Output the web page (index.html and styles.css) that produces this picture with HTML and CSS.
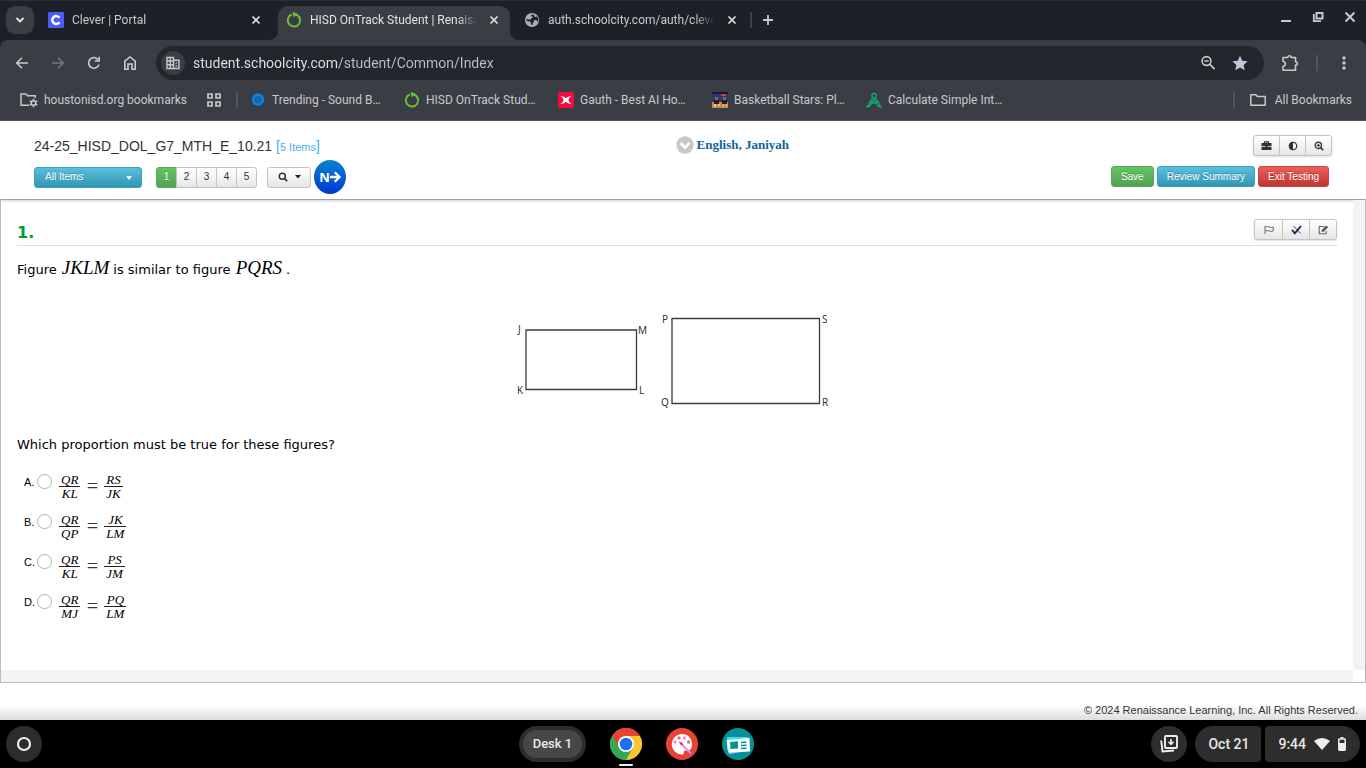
FILE: index.html
```html
<!DOCTYPE html>
<html lang="en">
<head>
<meta charset="utf-8">
<title>HISD OnTrack Student | Renaissance</title>
<link rel="stylesheet" href="styles.css">
</head>
<body>
<svg class="defs" aria-hidden="true">
  <symbol id="close" viewBox="0 0 10 10"><path d="M1.500 1.500l7 7M8.500 1.500l-7 7" stroke="currentColor" stroke-width="1.700"/></symbol>
  <symbol id="ring" viewBox="0 0 16 16"><path d="M9.500 2.300A6.200 6.200 0 1 1 5.800 2.500" fill="none" stroke="#6cbe3a" stroke-width="1.900"/><path d="M6.500 0l4.800 1.600-3.600 3.800z" fill="#6cbe3a"/><path d="M9 2.400a6.200 6.200 0 0 1 4.700 4" fill="none" stroke="#6cbe3a" stroke-width="1.900"/></symbol>
  <symbol id="folder" viewBox="0 0 16 14"><path d="M.8 1.800h5l1.600 1.800h7.800v8.600H.8z" fill="none" stroke="currentColor" stroke-width="1.500" stroke-linejoin="round"/></symbol>
</svg>

<header class="browser">
  <div class="tabstrip">
    <button class="tab-search" aria-label="Search tabs"><svg width="10" height="8" viewBox="0 0 10 8"><path d="M1.500 2L5 5.500 8.500 2" fill="none" stroke="currentColor" stroke-width="1.800"/></svg></button>
    <div class="tab">
      <svg width="16" height="16" viewBox="0 0 16 16"><rect width="16" height="16" rx="1" fill="#4a5cf5"/><path d="M11.400 5.800A3.900 3.900 0 1 0 11.400 10.200" fill="none" stroke="#fff" stroke-width="2.500"/></svg>
      <span class="tab-title">Clever | Portal</span>
      <button class="tab-close" aria-label="Close tab"><svg width="10" height="10"><use href="#close"/></svg></button>
    </div>
    <div class="tab tab-active">
      <svg width="16" height="16"><use href="#ring"/></svg>
      <span class="tab-title">HISD OnTrack Student | Renaissance</span>
      <button class="tab-close" aria-label="Close tab"><svg width="10" height="10"><use href="#close"/></svg></button>
    </div>
    <div class="tab">
      <svg width="16" height="16" viewBox="0 0 16 16"><circle cx="8" cy="8" r="7" fill="#a9adb5"/><path d="M7.500 2.500q-1 1.500.5 2t0 1.800q-1.500.2-1.700 1.400l-3.800-.6q-.3 1.500.8 2.200l2.700.3q1 .3.800 1.600l.8 1.800 1.200-.3v-2l1.300-1.300-.2-1.400 2.700.2.600 1.300 1-.2q.6-3.200-1.500-5l-1.200.8-1.300-.3V3z" fill="#1d2027"/></svg>
      <span class="tab-title">auth.schoolcity.com/auth/clever/login</span>
      <button class="tab-close" aria-label="Close tab"><svg width="10" height="10"><use href="#close"/></svg></button>
    </div>
    <i class="rule tab-rule"></i>
    <button class="icon-btn" aria-label="New tab"><svg width="12" height="12" viewBox="0 0 12 12"><path d="M6 1v10M1 6h10" stroke="currentColor" stroke-width="1.800"/></svg></button>
    <div class="window-controls">
      <button class="icon-btn" aria-label="Minimize"><svg width="12" height="12" viewBox="0 0 12 12"><path d="M1 10h10" stroke="currentColor" stroke-width="2"/></svg></button>
      <button class="icon-btn" aria-label="Restore"><svg width="12" height="12" viewBox="0 0 12 12"><path d="M4.500 2h6v5.500h-6z" fill="none" stroke="currentColor" stroke-width="2"/><path d="M1.800 3v7.200H9" fill="none" stroke="currentColor" stroke-width="1.800"/></svg></button>
      <button class="icon-btn" aria-label="Close window"><svg width="12" height="12" viewBox="0 0 12 12"><path d="M1.500 1.500l9 9M10.500 1.500l-9 9" stroke="currentColor" stroke-width="2"/></svg></button>
    </div>
  </div>

  <div class="toolbar">
    <div class="nav-buttons">
      <button class="icon-btn" aria-label="Back"><svg width="14" height="14" viewBox="0 0 14 14"><path d="M13 7H2M7 1.700L1.700 7 7 12.300" fill="none" stroke="currentColor" stroke-width="1.600"/></svg></button>
      <button class="icon-btn dim" aria-label="Forward"><svg width="14" height="14" viewBox="0 0 14 14"><path d="M1 7h11M7 1.700L12.300 7 7 12.300" fill="none" stroke="currentColor" stroke-width="1.600"/></svg></button>
      <button class="icon-btn" aria-label="Reload"><svg width="14" height="14" viewBox="0 0 14 14"><path d="M12 8.500A5.300 5.300 0 1 1 11.200 3.700" fill="none" stroke="currentColor" stroke-width="1.600"/><path d="M13 .8v5H7.800V4.300h3.600V.8z" fill="currentColor"/></svg></button>
      <button class="icon-btn" aria-label="Home"><svg width="14" height="16" viewBox="0 0 14 16"><path d="M1.800 14.200V6.200L7 2l5.200 4.200v8H9V9H5v5.200z" fill="none" stroke="currentColor" stroke-width="1.600"/></svg></button>
    </div>
    <div class="omnibox">
      <span class="site-chip"><svg width="14" height="14" viewBox="0 0 14 14"><path d="M1 1.500h6.500v11H1zM1 5h6.500M1 8.800h6.500M4.200 1.500v11M7.500 4.300H13v8.200H7.500" fill="none" stroke="currentColor" stroke-width="1.400"/><path d="M9.500 6.200h1.700v1.300H9.500zM9.500 9.200h1.700v1.300H9.500z" fill="currentColor"/></svg></span>
      <input class="url" type="text" aria-label="Address" value="student.schoolcity.com/student/Common/Index">
      <button class="icon-btn" aria-label="Zoom"><svg width="16" height="16" viewBox="0 0 16 16"><circle cx="6.500" cy="6" r="4.400" fill="none" stroke="#c7c7c7" stroke-width="1.600"/><path d="M4.300 6h4.400M9.600 9.200l5 5" stroke="#c7c7c7" stroke-width="1.700"/></svg></button>
      <button class="icon-btn" aria-label="Edit bookmark"><svg width="16" height="16" viewBox="0 0 16 16"><path d="M8 .8l2.200 4.900 5.400.6-4 3.600 1.100 5.300L8 12.500l-4.700 2.700 1.100-5.300-4-3.600 5.400-.6z" fill="#c0c6d8"/></svg></button>
    </div>
    <div class="toolbar-end">
      <button class="icon-btn" aria-label="Extensions"><svg width="18" height="18" viewBox="0 0 18 18"><path d="M2 3.500h4.800a1.700 1.700 0 0 1 3.400 0h4.300v4.200a1.700 1.700 0 0 1 0 3.400v5.100H2v-3.700c3.200-.6 3.200-4.700 0-5.300z" fill="none" stroke="currentColor" stroke-width="1.600" stroke-linejoin="round"/></svg></button>
      <i class="rule"></i>
      <button class="icon-btn" aria-label="Menu"><svg width="4" height="16" viewBox="0 0 4 16"><g fill="currentColor"><circle cx="2" cy="3" r="1.700"/><circle cx="2" cy="8" r="1.700"/><circle cx="2" cy="13" r="1.700"/></g></svg></button>
    </div>
  </div>

  <nav class="bookmarks" aria-label="Bookmarks">
    <a class="managed" href="#"><svg width="18" height="16" viewBox="0 0 18 16"><path d="M9 13.200H1V2h5l1.600 1.700h7.600V6" fill="none" stroke="currentColor" stroke-width="1.500"/><circle cx="13.500" cy="11" r="2.300" fill="none" stroke="currentColor" stroke-width="1.500"/><path d="M13.500 6.700v2M13.500 13.300v2M9.800 8.900l1.700 1M15.500 12.100l1.700 1M9.800 13.100l1.700-1M15.500 9.900l1.700-1" stroke="currentColor" stroke-width="1.500"/></svg>houstonisd.org bookmarks</a>
    <button class="icon-btn apps" aria-label="Apps"><svg width="14" height="14" viewBox="0 0 14 14"><path d="M1 1h4v4H1zM9 1h4v4H9zM1 9h4v4H1zM9 9h4v4H9z" fill="none" stroke="currentColor" stroke-width="1.700"/></svg></button>
    <i class="rule"></i>
    <div class="bookmark-list">
      <a class="bookmark" href="#"><svg width="16" height="16" viewBox="0 0 16 16"><circle cx="8" cy="8" r="7.200" fill="#0b3f70"/><circle cx="8" cy="7.600" r="6.400" fill="#1976c5"/><circle cx="8" cy="7.600" r="4.500" fill="#1268b4" stroke="#3793df" stroke-width=".7"/></svg>Trending - Sound B…</a>
      <a class="bookmark" href="#"><svg width="16" height="16"><use href="#ring"/></svg>HISD OnTrack Stud…</a>
      <a class="bookmark" href="#"><svg width="16" height="16" viewBox="0 0 16 16"><rect width="16" height="16" rx="2.500" fill="#f80b3c"/><path d="M2.500 4.300Q6.300 4 8 6.300 9.700 4 13.500 4.300 10.500 5.500 10.500 8T13.500 11.700Q9.700 12 8 9.700 6.300 12 2.500 11.700 5.500 10.500 5.500 8T2.500 4.300z" fill="#fff"/></svg>Gauth - Best AI Ho…</a>
      <a class="bookmark" href="#"><svg width="16" height="16" viewBox="0 0 16 16"><path d="M0 0h16v16H0z" fill="#263a78"/><path d="M0 10h16v6H0z" fill="#c98b55"/><path d="M0 0h16v2H0z" fill="#1b1733"/><path d="M9 2h5v2H9z" fill="#d33b46"/><path d="M3 5h3v3H3zM11 5h3v3h-3z" fill="#9b603e"/><path d="M2 8h5v4H2zM10 8h5v4h-5z" fill="#2b1c2d"/><path d="M2 12h2v3H2zM6 12h2v2H6zM11 12h1v3h-1zM14 12h1v2h-1z" fill="#f0c083"/></svg>Basketball Stars: Pl…</a>
      <a class="bookmark" href="#"><svg width="16" height="16" viewBox="0 0 16 16"><g fill="none" stroke="#17a97a" stroke-width="1.300"><circle cx="8" cy="3.600" r="2.200"/><path d="M6.800 5.700L1 15l2.700-.8L8 7.200l4.300 7 2.700.8-5.800-9.300M3 9.500q5 3 10 0"/></g></svg>Calculate Simple Int…</a>
    </div>
    <i class="rule"></i>
    <a class="all-bookmarks" href="#"><svg width="16" height="14"><use href="#folder"/></svg>All Bookmarks</a>
  </nav>
</header>

<section class="test-header">
  <div class="test-left">
    <h1 class="test-title">24-25_HISD_DOL_G7_MTH_E_10.21 <span class="item-count">[<small>5 Items</small>]</span></h1>
    <div class="test-nav">
      <span class="filter"><select class="btn btn-info" aria-label="Item filter"><option>All Items</option></select></span>
      <div class="group">
        <button class="btn btn-success">1</button><button class="btn">2</button><button class="btn">3</button><button class="btn">4</button><button class="btn">5</button>
      </div>
      <button class="btn search-btn" aria-label="Search options"><svg width="10" height="10" viewBox="0 0 10 10"><circle cx="4.300" cy="4.200" r="3" fill="none" stroke="#333" stroke-width="1.500"/><path d="M6.500 6.500l2.700 2.700" stroke="#333" stroke-width="1.700"/></svg><svg width="6" height="4" viewBox="0 0 6 4"><path d="M0 0h6L3 3.500z" fill="#222"/></svg></button>
      <button class="next" aria-label="Next">N<svg width="11" height="12" viewBox="0 0 11 12"><path d="M0 6h9M4.800 1.200L9.600 6l-4.800 4.800" fill="none" stroke="#fff" stroke-width="2.300"/></svg></button>
    </div>
  </div>
  <button class="student"><svg width="18" height="18" viewBox="0 0 18 18"><circle cx="9" cy="9" r="8.700" fill="#c8c8c8"/><path d="M4.500 7L9 11.500 13.500 7" fill="none" stroke="#fff" stroke-width="2.800"/></svg>English, Janiyah</button>
  <div class="test-right">
    <div class="group tools">
      <button class="btn" aria-label="Toolbox"><svg width="11" height="10" viewBox="0 0 11 10"><path d="M3.500 2.200V.8h4v1.400" fill="none" stroke="#333" stroke-width="1.200"/><path d="M.5 2h10v3.300h-10zM.5 6h10v3h-10z" fill="#333"/><path d="M4.500 5h2v1.600h-2z" fill="#333"/></svg></button><button class="btn" aria-label="Contrast"><svg width="10" height="10" viewBox="0 0 10 10"><circle cx="5" cy="5" r="3.700" fill="#fff" stroke="#333" stroke-width="1.200"/><path d="M5 1a4 4 0 0 0 0 8z" fill="#333"/></svg></button><button class="btn" aria-label="Zoom in"><svg width="10" height="10" viewBox="0 0 10 10"><circle cx="4.300" cy="4.300" r="3.200" fill="none" stroke="#333" stroke-width="1.300"/><path d="M2.500 4.300h3.600M4.300 2.500v3.600" stroke="#333"/><path d="M6.500 6.500l2.700 2.700" stroke="#333" stroke-width="1.700"/></svg></button>
    </div>
    <div class="actions">
      <button class="btn btn-success">Save</button>
      <button class="btn btn-info">Review Summary</button>
      <button class="btn btn-danger">Exit Testing</button>
    </div>
  </div>
</section>

<main class="frame">
  <article class="question">
    <div class="question-head">
      <h2 class="number">1.</h2>
      <div class="group marks">
        <button class="btn" aria-label="Flag"><svg width="10" height="10" viewBox="0 0 10 10"><path d="M1 1v8M1.500 2q2-1 4 0t3.700 0v4q-2 .8-3.700 0t-4 0" fill="none" stroke="#666"/></svg></button><button class="btn" aria-label="Eliminate answers"><svg width="11" height="10" viewBox="0 0 11 10"><path d="M2.500 1l7 7.500" stroke="#8990a2" stroke-width="1.200"/><path d="M1 5l2.800 3.300L10 1" fill="none" stroke="#172449" stroke-width="1.900"/></svg></button><button class="btn" aria-label="Notes"><svg width="11" height="10" viewBox="0 0 11 10"><path d="M6.500 1.500H1.200v7.300h7V6" fill="none" stroke="#666" stroke-width="1.100"/><path d="M4 4.800L8.300.5l1.800 1.800-4.300 4.300-2.200.4z" fill="#555"/></svg></button>
      </div>
    </div>
    <p class="stem">Figure <i class="math">JKLM</i>is similar to figure <i class="math">PQRS</i>.</p>
    <svg class="figure" width="328" height="105" viewBox="0 0 328 105" role="img" aria-label="Rectangles JKLM and PQRS">
      <g fill="none" stroke="#3c3c3c" stroke-width="1.300"><path d="M13 21h110.500v59.500H13zM159 9.500h147.500v85H159z"/></g>
      <g class="figure-labels"><text x="5" y="24">J</text><text x="125" y="25">M</text><text x="4" y="85">K</text><text x="126" y="85">L</text><text x="149" y="14">P</text><text x="309" y="14">S</text><text x="148" y="97">Q</text><text x="309" y="97">R</text></g>
    </svg>
    <p class="stem prompt">Which proportion must be true for these figures?</p>
    <div class="options">
      <label class="option"><span class="letter">A.</span><input type="radio" name="answer"><span class="frac"><i>QR</i><i>KL</i></span><span class="eq">=</span><span class="frac"><i>RS</i><i>JK</i></span></label>
      <label class="option"><span class="letter">B.</span><input type="radio" name="answer"><span class="frac"><i>QR</i><i>QP</i></span><span class="eq">=</span><span class="frac"><i>JK</i><i>LM</i></span></label>
      <label class="option"><span class="letter">C.</span><input type="radio" name="answer"><span class="frac"><i>QR</i><i>KL</i></span><span class="eq">=</span><span class="frac"><i>PS</i><i>JM</i></span></label>
      <label class="option"><span class="letter">D.</span><input type="radio" name="answer"><span class="frac"><i>QR</i><i>MJ</i></span><span class="eq">=</span><span class="frac"><i>PQ</i><i>LM</i></span></label>
    </div>
  </article>
  <div class="track"></div>
  <div class="track"></div>
</main>

<footer class="copyright">© 2024 Renaissance Learning, Inc. All Rights Reserved.</footer>

<div class="shelf">
  <button class="round" aria-label="Launcher"><svg width="16" height="16" viewBox="0 0 16 16"><circle cx="8" cy="8" r="6" fill="none" stroke="#eee" stroke-width="2.200"/></svg></button>
  <div class="apps-row">
    <button class="desk"><span>Desk 1</span></button>
    <button class="app running" aria-label="Chrome"><svg width="32" height="32" viewBox="0 0 32 32"><circle cx="16" cy="16" r="16" fill="#34a853"/><path d="M16 16L2.140 8A16 16 0 0 1 29.860 8z" fill="#ea4335"/><path d="M16 8h13.860A16 16 0 0 1 16 32l6.900-12z" fill="#fbc430"/><path d="M2.140 8l6.950 12L16 16V8z" fill="#ea4335"/><path d="M2.140 8l6.950 12A8 8 0 0 0 19 23.500L16 32A16 16 0 0 1 2.140 8z" fill="#34a853"/><circle cx="16" cy="16" r="8" fill="#fff"/><circle cx="16" cy="16" r="6.300" fill="#1a73e8"/></svg></button>
    <button class="app" aria-label="Canvas"><svg width="32" height="32" viewBox="0 0 32 32"><circle cx="16" cy="16" r="16" fill="#ea4335"/><path d="M16 6a10 10 0 1 0 0 20.500c2.500 0 1.300-2 2-3.300 1-1.700 3.300 0 5-.7 2-1 3-3 3-6C26 10 21.500 6 16 6z" fill="#fff"/><circle cx="13" cy="10" r="1.700" fill="#f06a8a"/><circle cx="18.500" cy="10" r="1.700" fill="#e88df0"/><circle cx="22.500" cy="14" r="1.700" fill="#ea6a60"/><circle cx="9" cy="14" r="1.700" fill="#e88df0"/><path d="M15 15.500l10 10" stroke="#e88df0" stroke-width="2"/><path d="M12.500 13.500l3.500 1 1.300 2.300-2 .7z" fill="#e33"/></svg></button>
    <button class="app" aria-label="News"><svg width="32" height="32" viewBox="0 0 32 32"><circle cx="16" cy="16" r="16" fill="#069298"/><path d="M5 9h21v13H5z" fill="#3ee0dc"/><path d="M5 13l22-1-1 11-19 3z" fill="#a7c3f5"/><path d="M4.500 12l23-2 .5 13.500-21.500 1z" fill="#fff"/><path d="M8 14l8-.7.200 7.200-7.700.5z" fill="#069298"/><path d="M19 14.500l5.500-.3M19 17.500l5.500-.2M19 20.500l5.500-.2" stroke="#069298" stroke-width="1.600"/></svg></button>
  </div>
  <div class="status">
    <button class="round" aria-label="Holding space"><svg width="18" height="18" viewBox="0 0 18 18"><rect x="5" y="1" width="12" height="12" rx="1" fill="none" stroke="#eee" stroke-width="1.900"/><path d="M1.200 5.500l1.300 11 11.500-1" fill="none" stroke="#eee" stroke-width="1.900"/><path d="M11 4v5M8.500 6.800L11 9.300l2.500-2.500" fill="none" stroke="#eee" stroke-width="1.600"/></svg></button>
    <button class="date">Oct 21</button>
    <button class="clock">9:44 <svg width="16" height="12" viewBox="0 0 16 12"><path d="M8 12L0 3q8-6 16 0z" fill="#eee"/></svg><svg width="8" height="14" viewBox="0 0 8 14"><path d="M2.500 0h3v1.500h-3z" fill="#eee"/><rect x=".8" y="2" width="6.400" height="11.200" rx=".6" fill="none" stroke="#eee" stroke-width="1.500"/><path d="M1 6h6v7H1z" fill="#eee"/></svg></button>
  </div>
</div>
</body>
</html>
```
FILE: styles.css
```css
* { box-sizing: border-box; }
html, body { margin: 0; }
body {
  display: flex;
  flex-direction: column;
  min-height: 100vh;
  background: #fff;
  color: #000;
  font-family: "Liberation Sans", Arial, sans-serif;
}
button, input, select { font: inherit; color: inherit; margin: 0; }
button { border: 0; padding: 0; background: none; }
a { color: inherit; text-decoration: none; }
svg { flex: none; display: block; }
.defs { position: absolute; width: 0; height: 0; }

/* Browser chrome */
.browser {
  background: #1d2027;
  color: #c7c9cc;
  font: 12px/16px Roboto, sans-serif;
}
.icon-btn {
  display: flex;
  align-items: center;
  justify-content: center;
  width: 32px;
  height: 28px;
  flex: none;
}
.rule { width: 2px; height: 16px; flex: none; background: #50545b; }
.tabstrip {
  display: flex;
  align-items: center;
  gap: 6px;
  height: 40px;
  padding-left: 6px;
  padding-bottom: 1px;
  border-top: 1px solid #2c3035;
}
.tab-search {
  display: grid;
  place-items: center;
  width: 28px;
  height: 28px;
  border-radius: 9px;
  background: #3a3e44;
  color: #e6e6e6;
}
.tab {
  position: relative;
  display: flex;
  align-items: center;
  gap: 8px;
  flex: 0 1 232px;
  min-width: 0;
  height: 28px;
  padding: 0 11px 0 8px;
}
.tab-active {
  align-self: flex-end;
  height: 34px;
  margin-bottom: -1px;
  padding-bottom: 6px;
  border-radius: 10px 10px 0 0;
  background: #3a3e44;
  color: #e3e3e3;
}
.tab-active::before, .tab-active::after {
  content: "";
  position: absolute;
  bottom: 0;
  width: 10px;
  height: 10px;
}
.tab-active::before { right: 100%; background: radial-gradient(circle at 0 0, #1d2027 10px, #3a3e44 11px); }
.tab-active::after { left: 100%; background: radial-gradient(circle at 100% 0, #1d2027 10px, #3a3e44 11px); }
.tab-title {
  flex: 1;
  min-width: 0;
  overflow: hidden;
  white-space: nowrap;
  mask-image: linear-gradient(to left, transparent, #000 20px);
}
.tab-close { padding: 0; margin-left: 4px; color: #e0e0e0; }
.tab-rule { margin-left: -4px; margin-right: -6px; background: #3c4047; }
.window-controls { display: flex; margin-left: auto; align-self: flex-start; color: #c3c9da; padding-top: 2px; }

.toolbar {
  display: flex;
  align-items: center;
  height: 46px;
  padding: 0 6px;
  border-radius: 8px 8px 0 0;
  background: #3a3e44;
}
.nav-buttons { display: flex; gap: 4px; }
.dim { color: #74777c; }
.omnibox {
  display: flex;
  align-items: center;
  flex: 1;
  height: 34px;
  margin-left: 10px;
  padding: 0 8px 0 5px;
  border-radius: 17px;
  background: #22262d;
}
.site-chip {
  display: grid;
  place-items: center;
  width: 24px;
  height: 24px;
  border-radius: 50%;
  background: #3a3e44;
}
.url {
  flex: 1;
  min-width: 0;
  height: 24px;
  margin-left: 8px;
  padding: 0;
  border: 0;
  outline: 0;
  font-size: 14px;
  color: transparent;
  background: linear-gradient(to right, #e6e7e9 146px, #bec0c4 146px) text;
}
.toolbar-end { display: flex; align-items: center; gap: 10px; margin-left: 10px; }

.bookmarks {
  display: flex;
  align-items: center;
  height: 35px;
  padding: 0 14px 6px 20px;
  background: #3a3e44;
  border-bottom: 1px solid #505357;
}
.bookmarks a { display: flex; align-items: center; gap: 6px; white-space: nowrap; }
.bookmarks .apps { margin-left: 11px; margin-right: 6px; }
.bookmark-list { display: flex; flex: 1; min-width: 0; overflow: hidden; margin-left: 12px; }
.bookmark { flex: 0 0 154px; }
.bookmarks .all-bookmarks { gap: 9px; margin-left: 15px; }

/* Test header */
.test-header {
  display: grid;
  grid-template-columns: 13fr auto 11fr;
  align-items: start;
  min-height: 78px;
  padding: 14px 34px 5px;
}
.test-title { margin: 0; font-size: 14px; line-height: 22px; font-weight: 400; color: #333; }
.item-count { color: #49afef; }
.item-count small { font-size: 11px; line-height: 11px; }
.test-nav { display: flex; align-items: center; margin-top: 3px; }
.btn {
  height: 21px;
  border: 1px solid #c4c4c4;
  border-radius: 3px;
  background: linear-gradient(#fff, #e6e6e6);
  color: #333;
  font-size: 10px;
  line-height: 12px;
}
.btn-success, .btn-info, .btn-danger { color: #fff; text-shadow: 0 -1px 0 rgba(0, 0, 0, .25); }
.btn-success { background: linear-gradient(#62c462, #51a351); border-color: #55ab55; }
.btn-info { background: linear-gradient(#5bc0de, #2f96b4); border-color: #3c9fbc; }
.btn-danger { background: linear-gradient(#ee5f5b, #bd362f); border-color: #c9443f; }
.group { display: flex; }
.group .btn { display: grid; place-items: center; width: 21px; margin-left: -1px; border-radius: 0; }
.group .btn:first-child { margin-left: 0; border-radius: 3px 0 0 3px; }
.group .btn:last-child { border-radius: 0 3px 3px 0; }
.filter { position: relative; margin-right: 14px; }
.filter select { display: block; width: 108px; padding: 0 10px; appearance: none; }
.filter::after {
  content: "";
  position: absolute;
  right: 10px;
  top: 9px;
  border: 3px solid transparent;
  border-top: 4px solid #fff;
  border-bottom: 0;
}
.search-btn { display: flex; align-items: center; justify-content: center; gap: 7px; width: 44px; margin: 0 3px 0 10px; }
.next {
  display: flex;
  align-items: center;
  justify-content: center;
  width: 32px;
  height: 34px;
  border-radius: 50%;
  background: linear-gradient(#0a84d0, #0038d0);
  color: #fff;
  font: bold 13px/16px "Noto Sans", sans-serif;
}
.student {
  display: flex;
  align-items: center;
  gap: 3px;
  color: #0e6596;
  font: bold 13px/20px "Liberation Serif", serif;
}
.test-right { display: flex; flex-direction: column; align-items: flex-end; gap: 10px; }
.tools .btn { width: 27px; }
.tools, .marks { filter: drop-shadow(0 1px 1px #ddd); }
.actions { display: flex; gap: 3px; margin-right: 3px; }
.actions .btn { padding: 0 9px; }

/* Question frame */
.frame {
  display: grid;
  grid-template-columns: 1fr 12px;
  grid-template-rows: 1fr 12px;
  flex: 1;
  border: 1px solid #bbb;
  border-top-color: #a0a0a0;
  box-shadow: inset 0 2px 1px #e6e6e6;
}
.track { background: #f3f3f3; }
.question { padding: 19px 16px 20px; }
.question-head {
  display: flex;
  justify-content: space-between;
  padding-bottom: 5px;
  border-bottom: 1px solid #ddd;
}
.number { margin: 0; font: bold 16px/28px "DejaVu Sans", sans-serif; height: 21px; color: #009a30; }
.marks .btn { width: 28px; }
.marks .btn:first-child { width: 29px; }
.stem { margin: 14px 0 0; font: 13px/20px "DejaVu Sans", sans-serif; }
.math { padding: 0 4px 0 1px; font: italic 19px/10px "Liberation Serif", serif; }
.figure { margin: 29px auto 0; }
.figure-labels { font: 10px "Noto Sans", sans-serif; fill: #333; }
.prompt { margin-top: 21px; }
.options { display: grid; grid-auto-rows: 40px; justify-items: start; margin: 18px 0 0 7px; }
.option { display: flex; align-items: flex-start; }
.letter { width: 13px; font-size: 11px; line-height: 18px; }
.option input {
  appearance: none;
  width: 15px;
  height: 15px;
  margin-top: 1px;
  margin-right: 7px;
  border: 1px solid #b0b0b0;
  border-radius: 50%;
  background: #fff;
}
.frac { display: flex; flex-direction: column; align-items: center; font: 13px/13px "Liberation Serif", serif; }
.frac i { padding: 0 2px; }
.frac i:first-child { align-self: stretch; text-align: center; border-bottom: 1px solid #222; }
.eq { width: 24px; text-align: center; font: 20px/27px "Liberation Serif", serif; color: #333; }

.copyright {
  height: 37px;
  padding: 19px 8px 0;
  background: linear-gradient(#fff 22px, #ddd);
  text-align: right;
  font-size: 11px;
  line-height: 16px;
  color: #333;
}

/* Shelf */
.shelf {
  display: flex;
  align-items: center;
  height: 48px;
  padding: 0 6px;
  background: #000;
  color: #e8e8e8;
  font: 500 14px/20px Roboto, sans-serif;
}
.shelf::before { content: ""; order: 1; flex: 6; }
.shelf::after { content: ""; order: 3; flex: 5; }
.round { display: grid; place-items: center; width: 36px; height: 36px; border-radius: 50%; background: #2d2d2d; }
.apps-row { order: 2; display: flex; gap: 24px; }
.status { order: 4; display: flex; }
.desk { padding: 4px; border-radius: 18px; background: #2d2d2d; font-size: 13px; }
.desk span { display: block; padding: 4px 10px; border-radius: 14px; background: #474747; }
.app { position: relative; }
.running::after {
  content: "";
  position: absolute;
  left: 9px;
  bottom: -4px;
  width: 14px;
  height: 2px;
  border-radius: 1px;
  background: #eee;
}
.date, .clock { height: 36px; background: #2d2d2d; }
.date { margin: 0 4px 0 8px; padding: 0 12px 0 13px; border-radius: 18px 4px 4px 18px; }
.clock { display: flex; align-items: center; gap: 8px; padding: 0 14px 0 13px; border-radius: 4px 18px 18px 4px; }
```
